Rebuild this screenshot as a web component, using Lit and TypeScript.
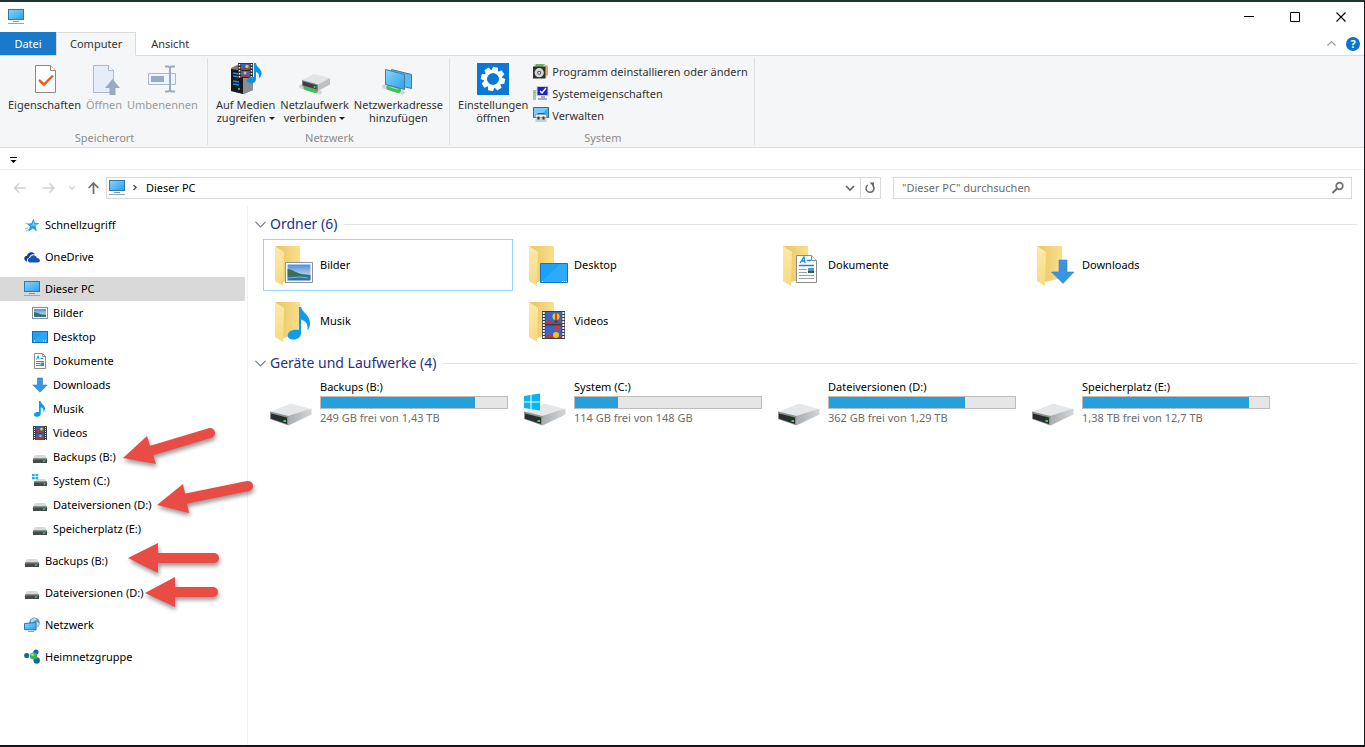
import { LitElement, html, svg, css, nothing } from "lit";
import type { SVGTemplateResult, TemplateResult } from "lit";
import { customElement, state } from "lit/decorators.js";
import { classMap } from "lit/directives/class-map.js";

type Art = SVGTemplateResult;

const icon = (size: number, art: Art, cls = ""): TemplateResult => html`<svg
  class=${cls}
  width=${size}
  height=${size}
  viewBox="0 0 ${size} ${size}"
  aria-hidden="true"
>${art}</svg>`;

/* ---------- 16px glyphs ---------- */

const monitor = svg`
  <rect x="0.5" y="0.5" width="15" height="10" fill="url(#screen)" stroke="#2a7ab0"/>
  <path d="M5 12h6v1H5z" fill="#7c98ad"/><path d="M0 14h16v1H0z" fill="#8ea9bd"/>`;

const star = svg`
  <path d="M9.6 1.600l1.200 4.200 4.700.2-3.900 2.800 1.400 5.700-4.100-3-4.800 3.200 1.900-5.300-3.200-2.700 4.500-.5z" fill="#2b9fe6"/>
  <path d="M9.300 4l.8 2.800 3 .2-3 1.700-4-.3 2.500-1.400z" fill="#7ccbf6"/>
  <path d="M1 12l3-1.500M2 14l3-1.800M1.500 6.500h2" stroke="#6db9e8" stroke-width=".9"/>`;

const cloud = svg`
  <path d="M.3 9.800C0 8 1.400 6.600 3 6.700 3.600 4 6.300 2.600 8.800 3.500c1 .4 1.700 1 2.100 1.900-3-.7-5.400 1-5.900 3.400C3 9.200 2.600 11 3.200 12.600 1.700 12.300.5 11.300.3 9.800z" fill="#0c3f9c"/>
  <path d="M3.900 11.200c0-1.400 1-2.400 2.300-2.500.4-2.300 3.500-3.500 5.500-1.600.9.700 1 1.500 1.200 2 1.700 0 3 1 3 2.300 0 1.200-1 2-2.200 2H6.200c-1.300 0-2.300-1-2.300-2.200z" fill="#1453b8"/>`;

const photo = svg`
  <rect x="0.5" y="2.500" width="15" height="11" fill="#fff" stroke="#8d8f94"/>
  <rect x="2" y="4" width="12" height="8" fill="url(#sky)"/>
  <path d="M2 7l3 .8 4 1.400 5 .6v.7H2z" fill="#3d6f57"/><path d="M2 10h12v2H2z" fill="#2f6f9f"/>`;

const desk = svg`
  <rect x="0.5" y="2.500" width="15" height="11" fill="#1ea0f5" stroke="#0c73ba"/>
  <path d="M1 13L10 3h5v10z" fill="#3bb0fb" opacity=".5"/>
  <path d="M2 12h1M11 12h1M13 12h1" stroke="#fff"/>`;

const doc = svg`
  <path d="M2.500.5h8l3 3v12h-11z" fill="#fff" stroke="#8c8c8c"/>
  <path d="M10.500.5v3h3" fill="none" stroke="#8c8c8c"/>
  <path d="M4.500 6.500L6.200 2.800 7 6.500M8.500 5.500h3M4 8.500h8M4 10.500h4M4 12.500h8" fill="none" stroke="#2190d8"/>
  <path d="M8.500 9.500H12V12H8.500z" fill="#4c86b4"/>`;

const down = svg`<path d="M5.500 1h5v7h4.700L8 15.200.8 8h4.700z" fill="#3a94e4" stroke="#2a7fd0" stroke-width=".6"/>`;

const note = svg`<path d="M7 0h1.500c.4 3 4.600 4.200 4.500 7.500 0 1.600-.6 2.700-1.600 3.700.6-2.900-.4-4.400-2.600-5v6.300c0 2-1.700 3.300-3.800 3.300-1.800 0-3-.9-3-2.300 0-1.700 2-2.900 5-2.500z" fill="#0a9bee"/>`;

const film = svg`
  <path d="M1 1h14v14H1z" fill="#3c3f42"/><path d="M4 1.500h8v6H4zM4 8.500h8v6H4z" fill="#2f62c0"/>
  <path d="M4 5.500l3-1 2 2 3-1v2H4zM4 13l3-1 5 1.500v1H4z" fill="#b7302d"/>
  <circle cx="9.500" cy="4" r="1.500" fill="#f0c420"/><circle cx="8.500" cy="11" r="1.300" fill="#f0a820"/>
  <path d="M2.500 2v13M13.500 2v13" stroke="#e9e9e9" stroke-width="1" stroke-dasharray="1 1"/>`;

const hdd = svg`
  <path d="M3 6h10l2 4H1z" fill="#d7d9da"/><path d="M1 9.500h14V14H1z" fill="#45494b"/>
  <path d="M1 9.500h14v1H1z" fill="#85898b"/><circle cx="12" cy="12" r=".9" fill="#3be05a"/>`;

const sysHdd = svg`
  <path d="M5 6h8l2 3H3z" fill="#d7d9da"/><path d="M2 8.500h13v4.500H2z" fill="#45494b"/>
  <path d="M2 8.500h13v1H2z" fill="#85898b"/><circle cx="12.500" cy="11" r=".9" fill="#3be05a"/>
  <path d="M0 1h2.700v2.300H0zM3.500 1h2.700v2.300H3.500zM0 4h2.700v2.300H0zM3.500 4h2.700v2.300H3.500z" fill="#13b5ef"/>`;

const network = svg`
  <circle cx="10.500" cy="5.800" r="5.300" fill="#5d9cc6"/><path d="M7 3c2-2 4-2 6-1-1 2-3 1-4 3l-2 1zM12 5c2 0 3 1 3 2-1 3-2 3-3 3z" fill="#b5dcf0"/>
  <path d="M.5 6.500l11.500-1v7.500l-11.500-.5z" fill="url(#screen)" stroke="#2876b4"/><path d="M4 14.500h6" stroke="#8ba4b6"/>`;

const homegroup = svg`
  <circle cx="2.700" cy="6.500" r="2.600" fill="#1d62ae"/><circle cx="12" cy="3" r="2.600" fill="#1d62ae"/>
  <circle cx="12.700" cy="11.500" r="3.200" fill="#1d62ae"/><circle cx="9.500" cy="7" r="3.600" fill="#3fb349"/>
  <circle cx="8.500" cy="5.800" r="1.300" fill="#a5e39d"/>`;

const uninstall = svg`
  <path d="M1 1h11l2 2v12H1z" fill="#d9d9d9"/><path d="M3 1h9l-3 3H2z" fill="#6fae65"/><path d="M12 2l3 1v9l-2 1z" fill="#e6a55a"/>
  <path d="M0 3.500h12.500V15.500H0z" fill="#2d2f31"/><circle cx="6.200" cy="9.700" r="4.600" fill="#d6dadd"/>
  <circle cx="6.200" cy="9.700" r="2" fill="#4a4e52"/><circle cx="6.200" cy="9.700" r="1" fill="#fff"/>`;

const sysProps = svg`
  <path d="M0 5h3v10H0z" fill="#b9bdc0"/><path d="M1 7h1v1H1z" fill="#35c14a"/>
  <path d="M3.500 1h12v10h-12z" fill="#c9cdd1"/><path d="M4.500 2h10v8h-10z" fill="#1a22b8"/>
  <path d="M7 6l2 2 4-5" fill="none" stroke="#fff" stroke-width="1.500"/>
  <path d="M8 11h4v2H8zM5 13h9v2H5z" fill="#a9aeb3"/>`;

const manage = svg`
  <path d="M.5 .5h15v10H.5z" fill="#3aaef0" stroke="#2a6f9f"/><path d="M1 1h14L6 10H1z" fill="#7accf8"/>
  <path d="M5 8V6.500h6V8" fill="none" stroke="#50575c" stroke-width="1.200"/>
  <path d="M2.500 7.500h11v3h-11z" fill="#eef0f1" stroke="#80868b" stroke-width=".6"/><path d="M2.500 10.500h11v4.500h-11z" fill="#c9cdd0"/>
  <path d="M4.500 9.500h2v3h-2zM9.500 9.500h2v3h-2z" fill="#33383c"/>`;

/* ---------- 32px ribbon glyphs ---------- */

const properties = svg`
  <path d="M6.500 2.500h15l5 5v22h-20z" fill="#fff" stroke="#8a8a8a"/><path d="M21.500 2.500v5h5" fill="#fff" stroke="#8a8a8a"/>
  <path d="M10 17l5 4.500L24 12.500" fill="none" stroke="#f05a14" stroke-width="2.400"/>`;

const openDoc = svg`
  <path d="M5.500 2.500h15l5 5v22h-20z" fill="#e4edfa" stroke="#a9b9d3"/><path d="M20.500 2.500v5h5" fill="#fff" stroke="#a9b9d3"/>
  <path d="M24.500 16l7.500 9h-4.500v7h-6v-7H17z" fill="#9aaac3"/>`;

const rename = svg`
  <path d="M2.500 10.500h27v11h-27z" fill="#eef4fd" stroke="#a9b9d3"/><path d="M5 13h13v6H5z" fill="#9aaac3"/>
  <path d="M19 3.500h3c1.500 0 2 .5 2 2v21c0 1.500-.5 2-2 2h-3M29 3.500h-3c-1.500 0-2 .5-2 2v21c0 1.500.5 2 2 2h3" fill="none" stroke="#9aaac3" stroke-width="2"/>`;

const media = svg`
  <path d="M1 5l8-4 14 3v23l-9 4L1 28z" fill="#75797c"/><path d="M1 6l12 2v23L1 28z" fill="#17191b"/><path d="M13 8l10-4v23l-10 4z" fill="#8b8f92"/>
  <path d="M3 10l6 1M3 13l6 1M3 18l6 1M3 21l6 1" stroke="#1b8ee6" stroke-width="1.300"/><circle cx="9" cy="26" r="1" fill="#2fd4e0"/>
  <path d="M8 0h15v15H8z" fill="#2b2d2f"/><path d="M11 .8h9v6h-9zM11 8h9v6h-9z" fill="#3764c5"/>
  <path d="M11 6l4-1 5 1v1h-9zM11 13l4-1 5 1v1h-9z" fill="#b7302d"/><circle cx="17" cy="3.500" r="1.700" fill="#f2c51d"/><circle cx="15" cy="10" r="1.500" fill="#f2c51d"/>
  <path d="M9.500 1v14M21.500 1v14" stroke="#eee" stroke-width="1.500" stroke-dasharray="1.500 1.500"/>
  <path d="M24 0h2c0 4 6 6 5.500 10.500-.2 2.500-1 3.600-2.500 5 .7-3.500-.6-6-3-6.500v7c0 3-2.500 4.500-5 4.500s-4.200-1.200-4-3.200c.2-2.500 3.500-4 7-3.300z" fill="#1292e4"/>`;

const plug = svg`
  <path d="M2 23.500l19 6" stroke="#d3d6d3" stroke-width="4" stroke-linecap="round"/>
  <path d="M7 24.500l9.500 3" stroke="#43bd55" stroke-width="5" stroke-linecap="round"/>
  <path d="M7 23.500l9 2.800" stroke="#98e69c" stroke-width="1.200"/>`;

const netDrive = svg`${plug}
  <path d="M3 17l12-6 16 4-12 7z" fill="#e3e4e6"/><path d="M3 17l16 4.500V28L3 23z" fill="#7f8385"/>
  <path d="M4 18.500l13.500 3.800v4L4 22.300z" fill="#3b3e40"/>
  <path d="M19 21.500L31 15v6.500L19 28z" fill="#bfc2c4"/><circle cx="15.500" cy="24" r="1" fill="#3fe060"/>`;

const netAddress = svg`
  <path d="M9.500 6.500l20 5v14l-20-5z" fill="#5bb9ee" stroke="#3d7ca5"/>
  ${plug}
  <path d="M3.500 6.500l19 5v15l-19-5z" fill="url(#screen)" stroke="#3f7fa8"/>`;

const teeth = [0, 45, 90, 135, 180, 225, 270, 315];
const settings = svg`
  <path d="M0 0h32v32H0z" fill="#0a78d7"/>
  ${teeth.map((a) => svg`<path d="M13.500 4h5l1 5h-7z" fill="#fff" transform="rotate(${a + 12} 16 16)"/>`)}
  <circle cx="16" cy="16" r="7.500" fill="none" stroke="#fff" stroke-width="3.400"/>
  <circle cx="16" cy="16" r="5.800" fill="#0a78d7"/>`;

/* ---------- 48px tiles ---------- */

const folder = (over: Art) => svg`
  <path d="M7 5h25v32l-17 4z" fill="url(#folderBack)"/><path d="M7 5l9 6-1 34-8-5z" fill="url(#folderFlap)"/>${over}`;

const fPhoto = folder(svg`
  <path d="M17.500 21.500h27v20h-27z" fill="#fff" stroke="#8f9298"/><path d="M19.500 23.500h23v16h-23z" fill="url(#sky)"/>
  <path d="M19.500 28c4 0 9 4 14 5l9 1v1h-23z" fill="#3f6d4c"/><path d="M19.500 34.500h23v5h-23z" fill="#2f7299"/>
  <path d="M20 37l12-1 8 1" stroke="#79b4d4" fill="none"/>`);

const fDesk = folder(svg`
  <path d="M18.500 22.500h27v19h-27z" fill="#1ba1fa" stroke="#0b74bd"/><path d="M19 41l19-18h7v18z" fill="#3eb1fc" opacity=".6"/>
  <path d="M20 40.500h1M40 40.500h1M42 40.500h1M44 40.500h1" stroke="#fff"/>`);

const fDoc = folder(svg`
  <path d="M20.500 14.500h15l5 5v22h-20z" fill="#fff" stroke="#8c8c8c"/><path d="M35.500 14.500v5h5" fill="#fff" stroke="#8c8c8c"/>
  <path d="M24 22l4-6 1 6M25.500 20h3M31 19.500h4M23 24.500h15" fill="none" stroke="#1488d4" stroke-width="1.300"/>
  <path d="M23 28.500h8M23 31.500h8M23 34.500h15M23 37.500h15" stroke="#9ba0a4"/><path d="M32 27h6v5h-6z" fill="#5795c2"/><path d="M32 30h6v2h-6z" fill="#2e5a46"/>`);

const fDown = folder(svg`<path d="M29 19h8v12h7L33 42.500 21.500 31H29z" fill="#3a94e4" stroke="#2f84d3" stroke-width=".6"/>`);

const fNote = folder(svg`<path d="M31 10h2c.6 5 9.500 8 9 17-.1 3-1 5-2.500 6.500.8-6-1.500-9.500-6.500-11v13.500c0 4-3.300 6.500-7.500 6.500-3.500 0-6-1.800-5.800-4.600.3-3.600 5-6 11.300-5z" fill="#0d9df0"/>`);

const fFilm = folder(svg`
  <path d="M20 14h23v28H20z" fill="#3b3e40"/><path d="M23.500 15h16v12h-16zM23.500 28.500h16V41h-16z" fill="#3a66cc"/>
  <path d="M23.500 25l4-2 4 3 8-1v2h-16zM23.500 39l5-2 5 2 6-1v3h-16z" fill="#c3362f"/>
  <circle cx="34" cy="19.500" r="3.500" fill="#efc51f"/><path d="M33 16h2v7h-2z" fill="#d4402f"/><path d="M32.500 23.500h3v2h-3z" fill="#5a3b22"/>
  <circle cx="35" cy="31" r="2.500" fill="#d83a30"/><circle cx="34" cy="38" r="3" fill="#efc51f"/>
  <path d="M21.800 15v27M41.300 15v27" stroke="#f1f1f1" stroke-width="2" stroke-dasharray="2 1"/>`);

const bigDrive = svg`
  <path d="M2 32l21-8.500 20 5.500-23 7.500z" fill="#e6e7e9"/><path d="M20 36l23.500-7.500v6L20.500 45.500z" fill="url(#driveSide)"/>
  <path d="M2 31.500L20.500 36v9.500L2 39z" fill="#8d9092"/><path d="M3 33.500l16 4v6.500l-16-5.200z" fill="#2a2d2f"/>
  <path d="M15.500 40h2.500v2h-2.500z" fill="#35de3d"/>`;

const bigSysDrive = svg`${bigDrive}
  <path d="M2 16l6.500-1v6.500H2zM9.500 14.800L18 13.500v8H9.500zM2 22.500h6.500V29L2 28zM9.500 22.500H18v8l-8.500-1.300z" fill="#06b6ef"/>`;

interface Place { label: string; art: Art; child?: boolean; spaced?: boolean }
interface Drive { label: string; info: string; used: number; art: Art }
interface BigCommand { lines: string[]; art: Art; menu?: boolean; off?: boolean }

const places: Place[] = [
  { label: "Schnellzugriff", art: star },
  { label: "OneDrive", art: cloud, spaced: true },
  { label: "Dieser PC", art: monitor, spaced: true },
  { label: "Bilder", art: photo, child: true },
  { label: "Desktop", art: desk, child: true },
  { label: "Dokumente", art: doc, child: true },
  { label: "Downloads", art: down, child: true },
  { label: "Musik", art: note, child: true },
  { label: "Videos", art: film, child: true },
  { label: "Backups (B:)", art: hdd, child: true },
  { label: "System (C:)", art: sysHdd, child: true },
  { label: "Dateiversionen (D:)", art: hdd, child: true },
  { label: "Speicherplatz (E:)", art: hdd, child: true },
  { label: "Backups (B:)", art: hdd, spaced: true },
  { label: "Dateiversionen (D:)", art: hdd, spaced: true },
  { label: "Netzwerk", art: network, spaced: true },
  { label: "Heimnetzgruppe", art: homegroup, spaced: true },
];

const folders = [
  { label: "Bilder", art: fPhoto },
  { label: "Desktop", art: fDesk },
  { label: "Dokumente", art: fDoc },
  { label: "Downloads", art: fDown },
  { label: "Musik", art: fNote },
  { label: "Videos", art: fFilm },
];

const drives: Drive[] = [
  { label: "Backups (B:)", info: "249 GB frei von 1,43 TB", used: 83, art: bigDrive },
  { label: "System (C:)", info: "114 GB frei von 148 GB", used: 23, art: bigSysDrive },
  { label: "Dateiversionen (D:)", info: "362 GB frei von 1,29 TB", used: 73, art: bigDrive },
  { label: "Speicherplatz (E:)", info: "1,38 TB frei von 12,7 TB", used: 89, art: bigDrive },
];

const locationCommands: BigCommand[] = [
  { lines: ["Eigenschaften"], art: properties },
  { lines: ["Öffnen"], art: openDoc, off: true },
  { lines: ["Umbenennen"], art: rename, off: true },
];

const networkCommands: BigCommand[] = [
  { lines: ["Auf Medien", "zugreifen"], art: media, menu: true },
  { lines: ["Netzlaufwerk", "verbinden"], art: netDrive, menu: true },
  { lines: ["Netzwerkadresse", "hinzufügen"], art: netAddress },
];

const systemCommands = [
  { label: "Programm deinstallieren oder ändern", art: uninstall },
  { label: "Systemeigenschaften", art: sysProps },
  { label: "Verwalten", art: manage },
];

@customElement("app-root")
export class AppRoot extends LitElement {
  static styles = css`
    :host {
      display: block;
      font: 12px/16px "Segoe UI", "Noto Sans", "Open Sans", sans-serif;
      color: #000;
    }
    * { box-sizing: border-box; }
    svg { display: block; flex: none; }
    button, input { font: inherit; color: inherit; border: 0; background: none; padding: 0; margin: 0; }
    a { color: inherit; text-decoration: none; }
    ul { list-style: none; margin: 0; padding: 0; }
    .defs { position: absolute; }
    .window {
      display: flex; flex-direction: column; min-height: 100vh; background: #fff;
      border: solid #14131a; border-width: 2px 1px 2px 0; border-top-color: #20352f;
    }
    .titlebar { display: flex; height: 30px; padding-left: 8px; align-items: center; }
    .controls { display: flex; margin-left: auto; }
    .controls button { width: 46px; height: 28px; display: grid; place-items: center; }
    .tabs { display: flex; height: 24px; border-bottom: 1px solid #dadbdc; color: #333; font-size: 11px; }
    .tab { height: 24px; padding: 0 14px; border: 1px solid transparent; }
    .tab.file { background: #1979ca; color: #fff; border: 0; height: 23px; min-width: 56px; }
    .tab.active { background: #f5f6f7; border-color: #dadbdc; border-bottom-color: #f5f6f7; padding: 0 13px; }
    .tabtools { display: flex; align-items: center; gap: 10px; margin-left: auto; padding-right: 4px; }
    .help { width: 14px; height: 14px; border-radius: 7px; background: #0a74d4; color: #fff; font-weight: 700; line-height: 14px; text-align: center; }
    .ribbon { display: flex; height: 92px; background: #f5f6f7; border-bottom: 1px solid #dadbdc; color: #333; font-size: 11px; line-height: 13px; padding: 2px 0; }
    .group { display: flex; flex-direction: column; justify-content: space-between; min-width: 208px; padding: 5px 6px 1px 8px; border-right: 1px solid #dfe0e1; }
    .group h2 { margin: 0; font: inherit; color: #8c8c8c; text-align: center; }
    .commands { display: flex; gap: 5px; align-items: flex-start; }
    .big { display: flex; flex-direction: column; align-items: center; gap: 3px; text-align: center; }
    .big span { display: block; white-space: nowrap; }
    .big:disabled { color: #9a9a9a; }
    .menu::after { content: ""; display: inline-block; margin-left: 3px; vertical-align: 2px; border: 3px solid transparent; border-top-color: #222; border-bottom: 0; }
    .list { display: grid; grid-auto-rows: 22px; }
    .small { display: flex; align-items: center; gap: 3px; height: 16px; white-space: nowrap; }
    .quick { height: 22px; border-bottom: 1px solid #ececec; padding: 2px 0 0 8px; display: flex; align-items: center; }
    .address { display: flex; align-items: center; padding: 6px 12px 7px 12px; height: 36px; }
    .history { display: flex; align-items: center; gap: 12px; padding-right: 6px; }
    .path { flex: 635 1 0; height: 22px; display: flex; align-items: center; border: 1px solid #d9d9d9; padding-left: 2px; }
    .crumb { display: flex; align-items: center; flex: 1; gap: 8px; }
    .path button { height: 20px; width: 20px; display: grid; place-items: center; }
    .path .reload { border-left: 1px solid #d9d9d9; }
    .search { flex: 365 1 0; height: 22px; display: flex; align-items: center; border: 1px solid #d9d9d9; margin-left: 12px; padding: 0 6px 0 8px; }
    .search input { flex: 1; min-width: 0; outline: 0; }
    .search input::placeholder { color: #6d6d6d; opacity: 1; }
    .text { font-size: 11px; }
    .body { flex: 1; display: flex; position: relative; }
    .places { width: 248px; padding: 7px 2px 0 0; border-right: 1px solid #f0f0f0; flex: none; }
    .spaced { margin-top: 8px; }
    .place { display: flex; align-items: center; gap: 5px; height: 24px; padding-left: 24px; }
    .place.child { padding-left: 32px; }
    .place.selected { background: #d9d9d9; }
    .main { flex: 1; min-width: 0; padding: 6px 7px 0 7px; }
    .heading { display: flex; align-items: center; gap: 4px; height: 24px; margin: 0 0 3px; font-weight: 400; font-size: 14px; line-height: 20px; color: #1e3287; white-space: nowrap; }
    .heading::after { content: ""; flex: 1; height: 1px; background: #e4e4e4; margin-left: 3px; }
    .grid { display: grid; grid-template-columns: repeat(auto-fill, 250px); gap: 4px; padding-left: 8px; margin-bottom: 4px; }
    .tile { display: flex; align-items: center; gap: 4px; height: 52px; padding: 0 4px; border: 1px solid transparent; }
    .tile.selected { border-color: #99d1ff; }
    .drive { flex: 1; align-self: flex-start; display: grid; gap: 1px; }
    .bar { height: 13px; border: 1px solid #bcbcbc; background: #e6e6e6; }
    .fill { height: 100%; background: #26a0da; }
    .info { color: #6d6d6d; }
    .marks { position: absolute; left: 0; top: 0; pointer-events: none; filter: drop-shadow(1px 3px 2px rgba(0, 0, 0, 0.4)); }
  `;

  @state() private place = 2;
  @state() private folder = 0;

  private big(c: BigCommand) {
    return html`<button class="big" ?disabled=${c.off}>
      ${icon(32, c.art)}
      <span>${c.lines.map((l, i) => html`<span class=${classMap({ menu: !!c.menu && i === 1 })}>${l}</span>`)}</span>
    </button>`;
  }

  private chevron() {
    return html`<svg width="11" height="7" viewBox="0 0 11 7" aria-hidden="true"><path d="M.5 .8l5 5 5-5" fill="none" stroke="#7a7a7a" stroke-width="1.2"/></svg>`;
  }

  private arrow(tip: number[], a: number[], b: number[], from: number[], to: number[]) {
    return svg`<path d="M${tip.join(" ")}L${a.join(" ")}L${b.join(" ")}z" fill="#e84c44"/>
      <path d="M${from.join(" ")}L${to.join(" ")}" stroke="#e84c44" stroke-width="10" stroke-linecap="round"/>`;
  }

  render() {
    return html`
      <svg class="defs" width="0" height="0" aria-hidden="true"><defs>
        <linearGradient id="screen" x1="0" y1="0" x2="1" y2="1"><stop offset="0" stop-color="#8bd6fb"/><stop offset="1" stop-color="#2a9fe8"/></linearGradient>
        <linearGradient id="sky" x1="0" y1="0" x2="0" y2="1"><stop offset="0" stop-color="#4f8fdd"/><stop offset="1" stop-color="#e4f1f8"/></linearGradient>
        <linearGradient id="folderBack"><stop offset="0" stop-color="#e9c462"/><stop offset="1" stop-color="#fbdf8c"/></linearGradient>
        <linearGradient id="folderFlap" x1="0" y1="0" x2="0" y2="1"><stop offset="0" stop-color="#fdeaa9"/><stop offset="1" stop-color="#f8d981"/></linearGradient>
        <linearGradient id="driveSide"><stop offset="0" stop-color="#a9acae"/><stop offset="1" stop-color="#d4d6d8"/></linearGradient>
      </defs></svg>
      <div class="window">
        <header class="titlebar">
          ${icon(16, monitor)}
          <div class="controls">
            <button aria-label="Minimieren">${icon(10, svg`<path d="M0 4.500h10" stroke="#000"/>`)}</button>
            <button aria-label="Maximieren">${icon(10, svg`<path d="M.5 .5h9v9h-9z" fill="none" stroke="#000"/>`)}</button>
            <button aria-label="Schließen">${icon(10, svg`<path d="M.5 .5l9 9M9.500 .5l-9 9" stroke="#000" stroke-width="1.100"/>`)}</button>
          </div>
        </header>
        <nav class="tabs" aria-label="Menüband">
          <button class="tab file">Datei</button>
          <button class="tab active">Computer</button>
          <button class="tab">Ansicht</button>
          <div class="tabtools">
            <button aria-label="Menüband minimieren">${icon(9, svg`<path d="M.5 6.500l4-4 4 4" fill="none" stroke="#9a9a9a" stroke-width="1.200"/>`)}</button>
            <button class="help" aria-label="Hilfe">?</button>
          </div>
        </nav>
        <div class="ribbon">
          <section class="group">
            <div class="commands">${locationCommands.map((c) => this.big(c))}</div>
            <h2>Speicherort</h2>
          </section>
          <section class="group">
            <div class="commands">${networkCommands.map((c) => this.big(c))}</div>
            <h2>Netzwerk</h2>
          </section>
          <section class="group">
            <div class="commands">
              ${this.big({ lines: ["Einstellungen", "öffnen"], art: settings })}
              <div class="list">
                ${systemCommands.map((c) => html`<button class="small">${icon(16, c.art)}${c.label}</button>`)}
              </div>
            </div>
            <h2>System</h2>
          </section>
        </div>
        <div class="quick">
          <button aria-label="Symbolleiste anpassen">${icon(10, svg`<path d="M2 2.500h7" stroke="#000"/><path d="M2.500 5h6l-3 3z"/>`)}</button>
        </div>
        <div class="address">
          <div class="history">
            <button aria-label="Zurück">${icon(16, svg`<path d="M14 8H2.500M7 3.500L2.500 8 7 12.500" fill="none" stroke="#cfcfcf" stroke-width="1.500"/>`)}</button>
            <button aria-label="Vorwärts">${icon(16, svg`<path d="M2.500 8H14M9.500 3.500L14 8l-4.500 4.500" fill="none" stroke="#cfcfcf" stroke-width="1.500"/>`)}</button>
            <button aria-label="Zuletzt besucht">${icon(8, svg`<path d="M1.500 2.500L4 5 6.500 2.500" fill="none" stroke="#d0d0d0" stroke-width="1.300"/>`)}</button>
            <button aria-label="Nach oben">${icon(12, svg`<path d="M5.500 12V1M.7 6l4.800-5 4.800 5" fill="none" stroke="#6f6f6f" stroke-width="1.800"/>`)}</button>
          </div>
          <div class="path">
            <div class="crumb">
              ${icon(16, monitor)}
              ${icon(5, svg`<path d="M.5 0L3 2.500.5 5" fill="none" stroke="#555" stroke-width="1.500"/>`)}
              <a class="text" href="#">Dieser PC</a>
            </div>
            <button aria-label="Verlauf">${icon(10, svg`<path d="M1 3l4 4 4-4" fill="none" stroke="#666" stroke-width="1.700"/>`)}</button>
            <button class="reload" aria-label="Aktualisieren">${icon(12, svg`<path d="M8.500 3.200A4 4 0 1 1 3.800 3" fill="none" stroke="#666" stroke-width="1.500"/><path d="M5.500 .5h4.500V5z" fill="#666"/>`)}</button>
          </div>
          <div class="search text">
            <input type="search" aria-label="Dieser PC durchsuchen" placeholder='"Dieser PC" durchsuchen' />
            ${icon(14, svg`<circle cx="8.500" cy="5" r="3.300" fill="none" stroke="#6e6e6e" stroke-width="1.700"/><path d="M6 7.500L1.500 12" stroke="#6e6e6e" stroke-width="2"/>`)}
          </div>
        </div>
        <div class="body">
          <nav class="places text" aria-label="Navigationsbereich">
            <ul>
              ${places.map((p, i) => html`<li class=${classMap({ spaced: !!p.spaced })}>
                <a
                  class=${classMap({ place: true, child: !!p.child, selected: i === this.place })}
                  href="#"
                  aria-current=${i === this.place ? "page" : nothing}
                  @click=${(e: Event) => { e.preventDefault(); this.place = i; }}
                >${icon(16, p.art)}${p.label}</a>
              </li>`)}
            </ul>
          </nav>
          <main class="main text">
            <h2 class="heading">${this.chevron()}Ordner (6)</h2>
            <div class="grid">
              ${folders.map((f, i) => html`<a
                class=${classMap({ tile: true, selected: i === this.folder })}
                href="#"
                @click=${(e: Event) => { e.preventDefault(); this.folder = i; }}
              >${icon(48, f.art)}${f.label}</a>`)}
            </div>
            <h2 class="heading">${this.chevron()}Geräte und Laufwerke (4)</h2>
            <div class="grid">
              ${drives.map((d) => html`<a class="tile" href="#">
                ${icon(48, d.art)}
                <div class="drive">
                  <span>${d.label}</span>
                  <div class="bar" role="meter" aria-label=${d.label} aria-valuemin="0" aria-valuemax="100" aria-valuenow=${d.used}>
                    <div class="fill" style="width:${d.used}%"></div>
                  </div>
                  <span class="info">${d.info}</span>
                </div>
              </a>`)}
            </div>
          </main>
          <svg class="marks" width="264" height="420" viewBox="0 206 264 420" fill="none" aria-hidden="true">
            ${this.arrow([123, 458], [147, 436], [156, 464], [150, 451], [210, 433])}
            ${this.arrow([157, 505], [183, 484], [189, 513], [184, 499], [248, 486])}
            ${this.arrow([128, 558], [158, 543], [158, 573], [156, 558], [214, 558])}
            ${this.arrow([145, 593], [175, 577], [175, 607], [173, 592], [213, 592])}
          </svg>
        </div>
      </div>
    `;
  }
}
